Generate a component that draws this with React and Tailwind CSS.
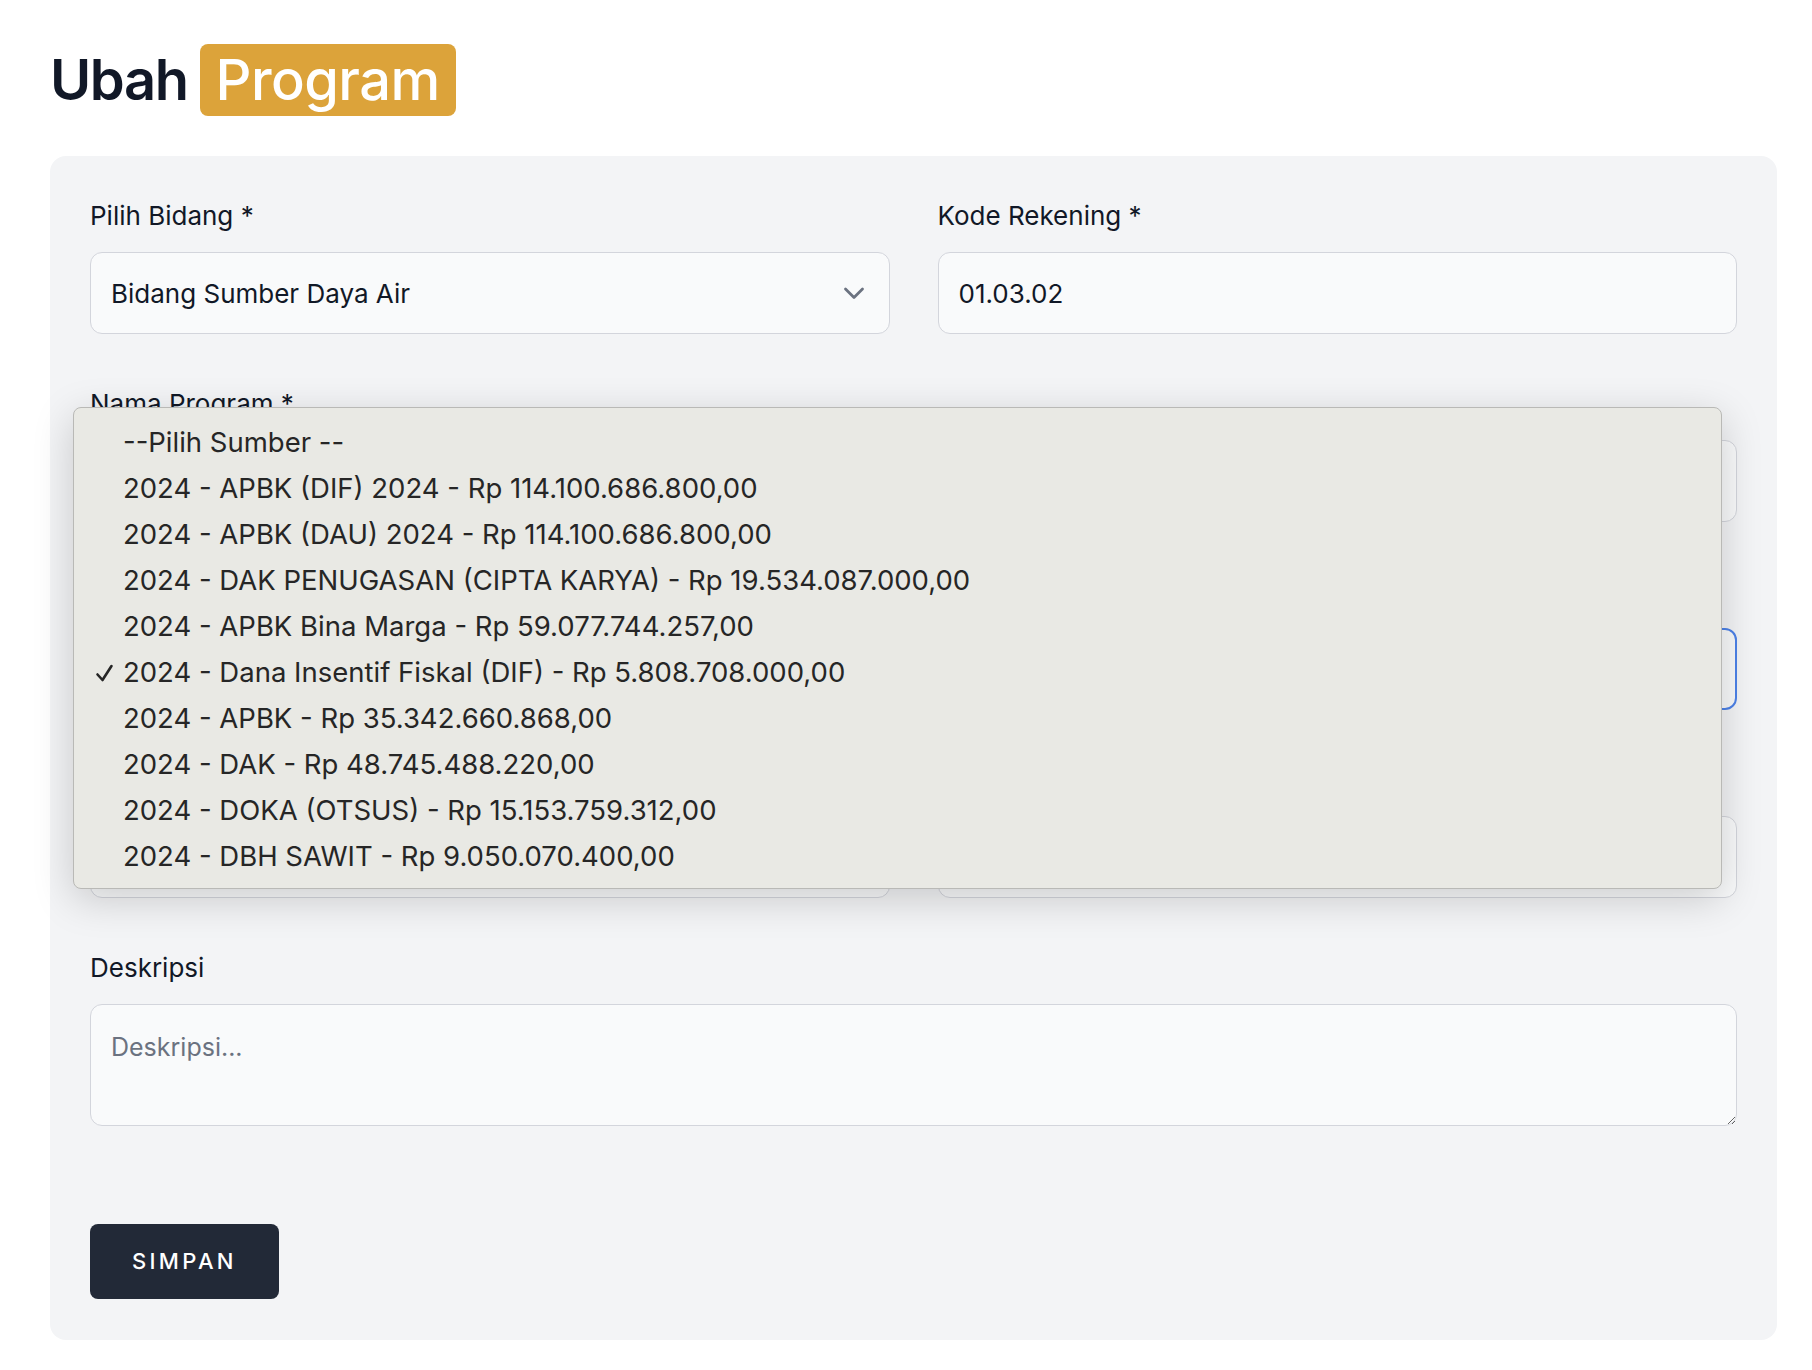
import React from "react";

const items = [
  "--Pilih Sumber --",
  "2024 - APBK (DIF) 2024 - Rp 114.100.686.800,00",
  "2024 - APBK (DAU) 2024 - Rp 114.100.686.800,00",
  "2024 - DAK PENUGASAN (CIPTA KARYA) - Rp 19.534.087.000,00",
  "2024 - APBK Bina Marga - Rp 59.077.744.257,00",
  "2024 - Dana Insentif Fiskal (DIF) - Rp 5.808.708.000,00",
  "2024 - APBK - Rp 35.342.660.868,00",
  "2024 - DAK - Rp 48.745.488.220,00",
  "2024 - DOKA (OTSUS) - Rp 15.153.759.312,00",
  "2024 - DBH SAWIT - Rp 9.050.070.400,00",
];

function Chevron() {
  return (
    <svg width="22" height="13" viewBox="0 0 22 13" fill="none" className="shrink-0">
      <path d="M2.5 2 L11 10.5 L19.5 2" stroke="#6b7280" strokeWidth="2.8" strokeLinecap="round" strokeLinejoin="round" />
    </svg>
  );
}

function Label({ children }) {
  return <div className="text-[26px] leading-[32px] text-[#111827] mb-5 whitespace-nowrap">{children}</div>;
}

function Box({ children, blue, className = "" }) {
  return (
    <div
      className={
        "h-[82px] rounded-xl bg-[#f9fafb] flex items-center pl-5 pr-[24px] text-[26px] text-[#111827] " +
        (blue ? "border-2 border-[#4d82e8] " : "border-[1.5px] border-[#d3d5dc] ") +
        className
      }
    >
      {children}
    </div>
  );
}

export default function App() {
  return (
    <div className="min-h-[1370px] bg-white pt-[44px] pl-[50px]" style={{ fontFamily: "Inter, 'Noto Sans', sans-serif" }}>
      <h1 className="flex items-center gap-[12px] text-[56px] leading-none text-[#111827]">
        <span className="font-semibold tracking-[-0.025em]">Ubah</span>
        <span className="bg-[#dca33a] text-white font-medium rounded-lg px-4 py-2 tracking-[-0.01em]">Program</span>
      </h1>

      <div className="relative mt-10 w-[1727px] bg-[#f3f4f6] rounded-2xl px-10 pt-11 pb-[41px]">
        <div className="flex flex-col gap-[54px]">
          <div className="grid grid-cols-2 gap-12">
            <div>
              <Label>Pilih Bidang *</Label>
              <Box className="justify-between">
                <span>Bidang Sumber Daya Air</span>
                <Chevron />
              </Box>
            </div>
            <div>
              <Label>Kode Rekening *</Label>
              <Box>01.03.02</Box>
            </div>
          </div>

          <div>
            <Label>Nama Program *</Label>
            <Box>Pengelolaan Sumber Daya Air (SDA)</Box>
          </div>

          <div>
            <Label>Sumber Dana *</Label>
            <Box blue className="justify-between">
              <span>2024 - Dana Insentif Fiskal (DIF) - Rp 5.808.708.000,00</span>
              <Chevron />
            </Box>
          </div>

          <div className="grid grid-cols-2 gap-12">
            <div>
              <Label>Pagu Anggaran *</Label>
              <Box>Rp 5.808.708.000,00</Box>
            </div>
            <div>
              <Label>Tahun *</Label>
              <Box>2024</Box>
            </div>
          </div>

          <div>
            <Label>Deskripsi</Label>
            <textarea
              placeholder="Deskripsi..."
              className="block w-full h-[122px] rounded-xl bg-[#f9fafb] border-[1.5px] border-[#d3d5dc] px-5 pt-[26px] pb-4 text-[25px] leading-[32px] text-[#111827] placeholder:text-[#6b7280] outline-none"
            />
          </div>
        </div>

        <div className="mt-[98px]">
          <button className="h-[75px] px-[42px] rounded-lg bg-[#222937] text-white text-[22px] font-medium tracking-[0.15em] flex items-center">
            SIMPAN
          </button>
        </div>

        <div className="absolute left-[23px] top-[251px] w-[1649px] bg-[#e9e9e4] border border-[#b9b9b6] rounded-lg pt-[12px] pb-[8px] shadow-[0_10px_40px_rgba(0,0,0,0.18)]">
          {items.map((t, i) => (
            <div key={i} className="h-[46px] flex items-center pl-[21px] text-[27.5px] text-[#262626] whitespace-nowrap">
              <span className="w-[28px] flex items-center">
                {i === 5 && (
                  <svg width="19" height="18" viewBox="0 0 19 18" fill="none">
                    <path d="M2.5 10.5 L7.5 16 L16.5 2" stroke="#262626" strokeWidth="2.6" strokeLinecap="round" strokeLinejoin="round" />
                  </svg>
                )}
              </span>
              <span>{t}</span>
            </div>
          ))}
        </div>
      </div>
    </div>
  );
}
